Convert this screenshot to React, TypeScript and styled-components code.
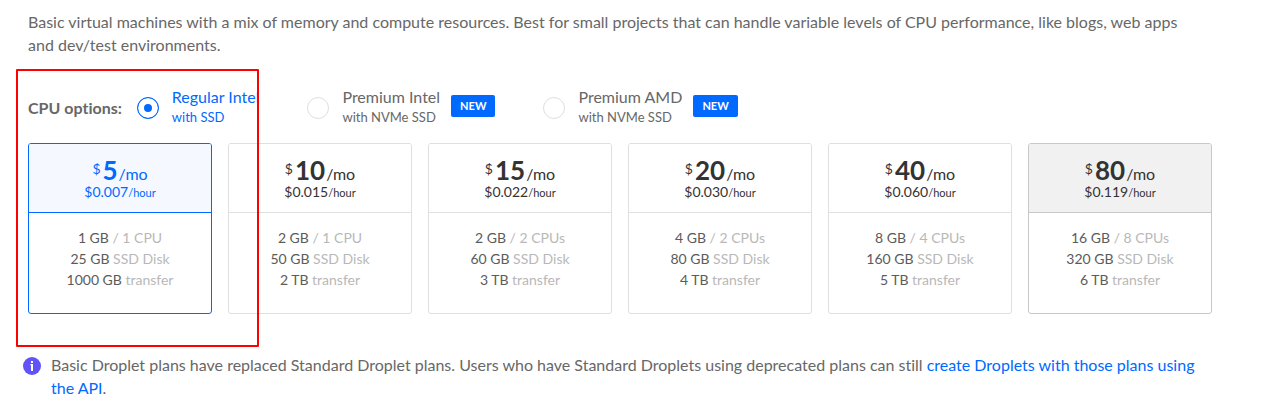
import React, { useState } from "react";
import styled, { createGlobalStyle } from "styled-components";

const GlobalStyle = createGlobalStyle`
  *, *::before, *::after { box-sizing: border-box; }
  body {
    margin: 0;
    background: #fff;
    color: #676767;
    font-family: Lato, "Liberation Sans", sans-serif;
    font-size: 16px;
    font-variant-ligatures: none;
    line-height: 23px;
  }
`;

const Page = styled.main`
  position: relative;
  padding: 10px 52px 14px 28px;
`;

const Description = styled.p`
  margin: 0 0 31px;
  padding-right: 16px;
`;

const CpuOptions = styled.fieldset`
  display: flex;
  align-items: center;
  margin: 0 0 16px;
  padding: 0;
  border: 0;
`;

const OptionsTitle = styled.span`
  flex: none;
  margin-right: 15px;
  font-weight: 700;
`;

const Option = styled.label`
  display: flex;
  align-items: center;
  flex: none;
  margin-right: 48px;
  cursor: pointer;
`;

const Radio = styled.input`
  appearance: none;
  width: 22px;
  height: 22px;
  margin: 2px 13px 0 0;
  border: 1px solid #dfdfdf;
  border-radius: 50%;
  background: #fff;

  &:checked {
    border-color: #0069ff;
    background: #0069ff;
    box-shadow: inset 0 0 0 6px #fff;
  }
`;

const OptionText = styled.span<{ $active: boolean }>`
  display: flex;
  flex-direction: column;
  line-height: 20px;
  color: ${(p) => (p.$active ? "#0069ff" : "#676767")};
`;

const OptionDetail = styled.small`
  font-size: 13px;
`;

const Badge = styled.span`
  padding: 0 9px;
  margin: 0 0 2px 11px;
  border-radius: 2px;
  background: #0069ff;
  color: #fff;
  font-size: 11px;
  font-weight: 700;
  line-height: 22px;
`;

const Plans = styled.div`
  display: grid;
  grid-template-columns: repeat(6, 1fr);
  gap: 16px;
  margin-bottom: 39px;
`;

type Tone = "active" | "hover" | "plain";
const tones = {
  active: { line: "#0069ff", fill: "#f5f8ff", text: "#0069ff" },
  hover: { line: "#c8c8c8", fill: "#f1f1f1", text: "#333" },
  plain: { line: "#dfdfdf", fill: "#fff", text: "#333" },
};

const Card = styled.label<{ $tone: Tone }>`
  display: block;
  border: 1px solid ${(p) => tones[p.$tone].line};
  border-radius: 3px;
  overflow: hidden;
  text-align: center;
  cursor: pointer;
`;

const CardRadio = styled.input`
  position: absolute;
  opacity: 0;
  pointer-events: none;
`;

const Price = styled.div<{ $tone: Tone }>`
  padding: 13px 0 12px;
  border-bottom: 1px solid ${(p) => tones[p.$tone].line};
  background: ${(p) => tones[p.$tone].fill};
  color: ${(p) => tones[p.$tone].text};
`;

const Monthly = styled.div`
  display: flex;
  justify-content: center;
  align-items: baseline;
  height: 26px;
  line-height: 26px;
`;

const Dollar = styled.span`
  align-self: flex-start;
  margin-right: 2px;
  font-size: 14px;
  line-height: 24px;
`;

const Amount = styled.strong`
  font-size: 26px;
  font-weight: 700;
`;

const PerMonth = styled.span`
  margin-left: 1px;
  line-height: 16px;
`;

const Hourly = styled.div`
  font-size: 14px;
  line-height: 17px;
`;

const PerHour = styled.span`
  font-size: 11px;
  line-height: 12px;
`;

const Specs = styled.div`
  padding: 14px 0 23px;
  color: #b8b8b8;
  font-size: 14px;
  line-height: 21px;
`;

const Spec = styled.div`
  & > b {
    color: #5b5b5b;
    font-weight: 400;
  }
`;

const Notice = styled.aside`
  display: flex;
  align-items: flex-start;
  gap: 10px;
  margin-left: -5px;
`;

const InfoIcon = styled.svg`
  flex: none;
  margin-top: 4px;
`;

const NoticeText = styled.p`
  margin: 0;
`;

const Link = styled.a`
  color: #0069ff;
  text-decoration: none;
`;

const Highlight = styled.div`
  position: absolute;
  top: 69px;
  left: 16px;
  width: 243px;
  height: 278px;
  border: 2px solid #f00;
  border-radius: 1px;
  pointer-events: none;
`;

const cpuOptions = [
  { name: "Regular Intel", detail: "with SSD", isNew: false },
  { name: "Premium Intel", detail: "with NVMe SSD", isNew: true },
  { name: "Premium AMD", detail: "with NVMe SSD", isNew: true },
];

const plans = [
  { price: 5, hourly: "0.007", memory: "1 GB", cpu: "1 CPU", disk: "25 GB", transfer: "1000 GB" },
  { price: 10, hourly: "0.015", memory: "2 GB", cpu: "1 CPU", disk: "50 GB", transfer: "2 TB" },
  { price: 15, hourly: "0.022", memory: "2 GB", cpu: "2 CPUs", disk: "60 GB", transfer: "3 TB" },
  { price: 20, hourly: "0.030", memory: "4 GB", cpu: "2 CPUs", disk: "80 GB", transfer: "4 TB" },
  { price: 40, hourly: "0.060", memory: "8 GB", cpu: "4 CPUs", disk: "160 GB", transfer: "5 TB" },
  { price: 80, hourly: "0.119", memory: "16 GB", cpu: "8 CPUs", disk: "320 GB", transfer: "6 TB" },
];

export default function App() {
  const [cpu, setCpu] = useState(0);
  const [plan, setPlan] = useState(5);
  const [hovered, setHovered] = useState(80);

  const toneOf = (price: number): Tone =>
    price === plan ? "active" : price === hovered ? "hover" : "plain";

  return (
    <>
      <GlobalStyle />
      <Page>
        <Description>
          Basic virtual machines with a mix of memory and compute resources. Best for small
          projects that can handle variable levels of CPU performance, like blogs, web apps and
          dev/test environments.
        </Description>

        <CpuOptions aria-labelledby="cpu-title">
          <OptionsTitle id="cpu-title">CPU options:</OptionsTitle>
          {cpuOptions.map((o, i) => (
            <Option key={o.name}>
              <Radio type="radio" name="cpu" checked={cpu === i} onChange={() => setCpu(i)} />
              <OptionText $active={cpu === i}>
                {o.name}
                <OptionDetail>{o.detail}</OptionDetail>
              </OptionText>
              {o.isNew && <Badge>NEW</Badge>}
            </Option>
          ))}
        </CpuOptions>

        <Plans role="radiogroup" aria-label="Plans">
          {plans.map((p) => {
            const tone = toneOf(p.price);
            return (
              <Card key={p.price} $tone={tone} onMouseEnter={() => setHovered(p.price)}>
                <CardRadio
                  type="radio"
                  name="plan"
                  checked={plan === p.price}
                  onChange={() => setPlan(p.price)}
                />
                <Price $tone={tone}>
                  <Monthly>
                    <Dollar>$</Dollar>
                    <Amount>{p.price}</Amount>
                    <PerMonth>/mo</PerMonth>
                  </Monthly>
                  <Hourly>
                    ${p.hourly}
                    <PerHour>/hour</PerHour>
                  </Hourly>
                </Price>
                <Specs>
                  <Spec><b>{p.memory}</b> / {p.cpu}</Spec>
                  <Spec><b>{p.disk}</b> SSD Disk</Spec>
                  <Spec><b>{p.transfer}</b> transfer</Spec>
                </Specs>
              </Card>
            );
          })}
        </Plans>

        <Notice>
          <InfoIcon width="18" height="18" viewBox="0 0 18 18" aria-hidden="true">
            <circle cx="9" cy="9" r="9" fill="#6153f7" />
            <path d="M8 4h2v2H8zM7.4 7H10v7H8V8.200h-.6z" fill="#fff" />
          </InfoIcon>
          <NoticeText>
            Basic Droplet plans have replaced Standard Droplet plans. Users who have Standard
            Droplets using deprecated plans can still{" "}
            <Link href="#api">create Droplets with those plans using the API</Link>.
          </NoticeText>
        </Notice>
        <Highlight />
      </Page>
    </>
  );
}
